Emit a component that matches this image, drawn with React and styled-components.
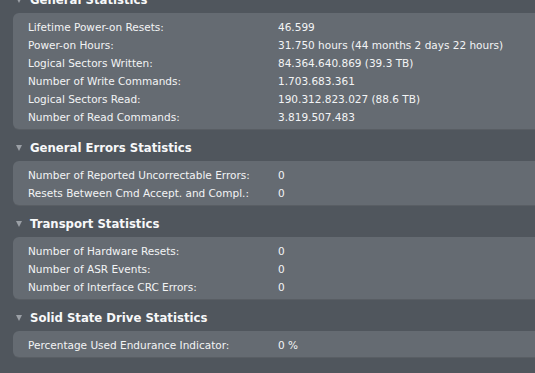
import styled, { createGlobalStyle } from "styled-components"

const Global = createGlobalStyle`
  html, body {
    margin: 0;
    padding: 0;
    background: #50565d;
    overflow: hidden;
  }
  body {
    font-family: "DejaVu Sans", "Liberation Sans", sans-serif;
    -webkit-font-smoothing: antialiased;
  }
`

const Page = styled.div`
  width: 535px;
  height: 373px;
  background: #50565d;
  overflow: hidden;
`

const Sections = styled.div`
  display: flex;
  flex-direction: column;
  margin-top: -19px;
`

const Header = styled.div`
  display: flex;
  align-items: center;
  height: 32px;
  padding: 5px 0 0 16px;
  box-sizing: border-box;
  gap: 8px;
  color: #f7f8f9;
  font-size: 11.7px;
  font-weight: bold;
`

const Disclosure = styled.span`
  width: 0;
  height: 0;
  border-left: 3.5px solid transparent;
  border-right: 3.5px solid transparent;
  border-top: 6px solid #9ba0a6;
`

const Panel = styled.div`
  margin-left: 13px;
  margin-right: -8px;
  padding: 4px 0;
  background: #656b72;
  border-radius: 6px;
  box-shadow: 0 1px 0 #595e64;
`

const Row = styled.div`
  display: grid;
  grid-template-columns: 250px 1fr;
  align-items: center;
  height: 18px;
  padding: 1px 0 0 15px;
  box-sizing: border-box;
  font-size: 10.5px;
  color: #f3f4f5;
  white-space: nowrap;
`

const sections = [
  {
    title: "General Statistics",
    rows: [
      ["Lifetime Power-on Resets:", "46.599"],
      ["Power-on Hours:", "31.750 hours (44 months 2 days 22 hours)"],
      ["Logical Sectors Written:", "84.364.640.869 (39.3 TB)"],
      ["Number of Write Commands:", "1.703.683.361"],
      ["Logical Sectors Read:", "190.312.823.027 (88.6 TB)"],
      ["Number of Read Commands:", "3.819.507.483"],
    ],
  },
  {
    title: "General Errors Statistics",
    rows: [
      ["Number of Reported Uncorrectable Errors:", "0"],
      ["Resets Between Cmd Accept. and Compl.:", "0"],
    ],
  },
  {
    title: "Transport Statistics",
    rows: [
      ["Number of Hardware Resets:", "0"],
      ["Number of ASR Events:", "0"],
      ["Number of Interface CRC Errors:", "0"],
    ],
  },
  {
    title: "Solid State Drive Statistics",
    rows: [["Percentage Used Endurance Indicator:", "0 %"]],
  },
]

const App = () => {
  return (
    <Page>
      <Global />
      <Sections>
        {sections.map((s) => (
          <div key={s.title}>
            <Header>
              <Disclosure />
              {s.title}
            </Header>
            <Panel>
              {s.rows.map(([label, value]) => (
                <Row key={label}>
                  <span>{label}</span>
                  <span>{value}</span>
                </Row>
              ))}
            </Panel>
          </div>
        ))}
      </Sections>
    </Page>
  )
}

export default App
